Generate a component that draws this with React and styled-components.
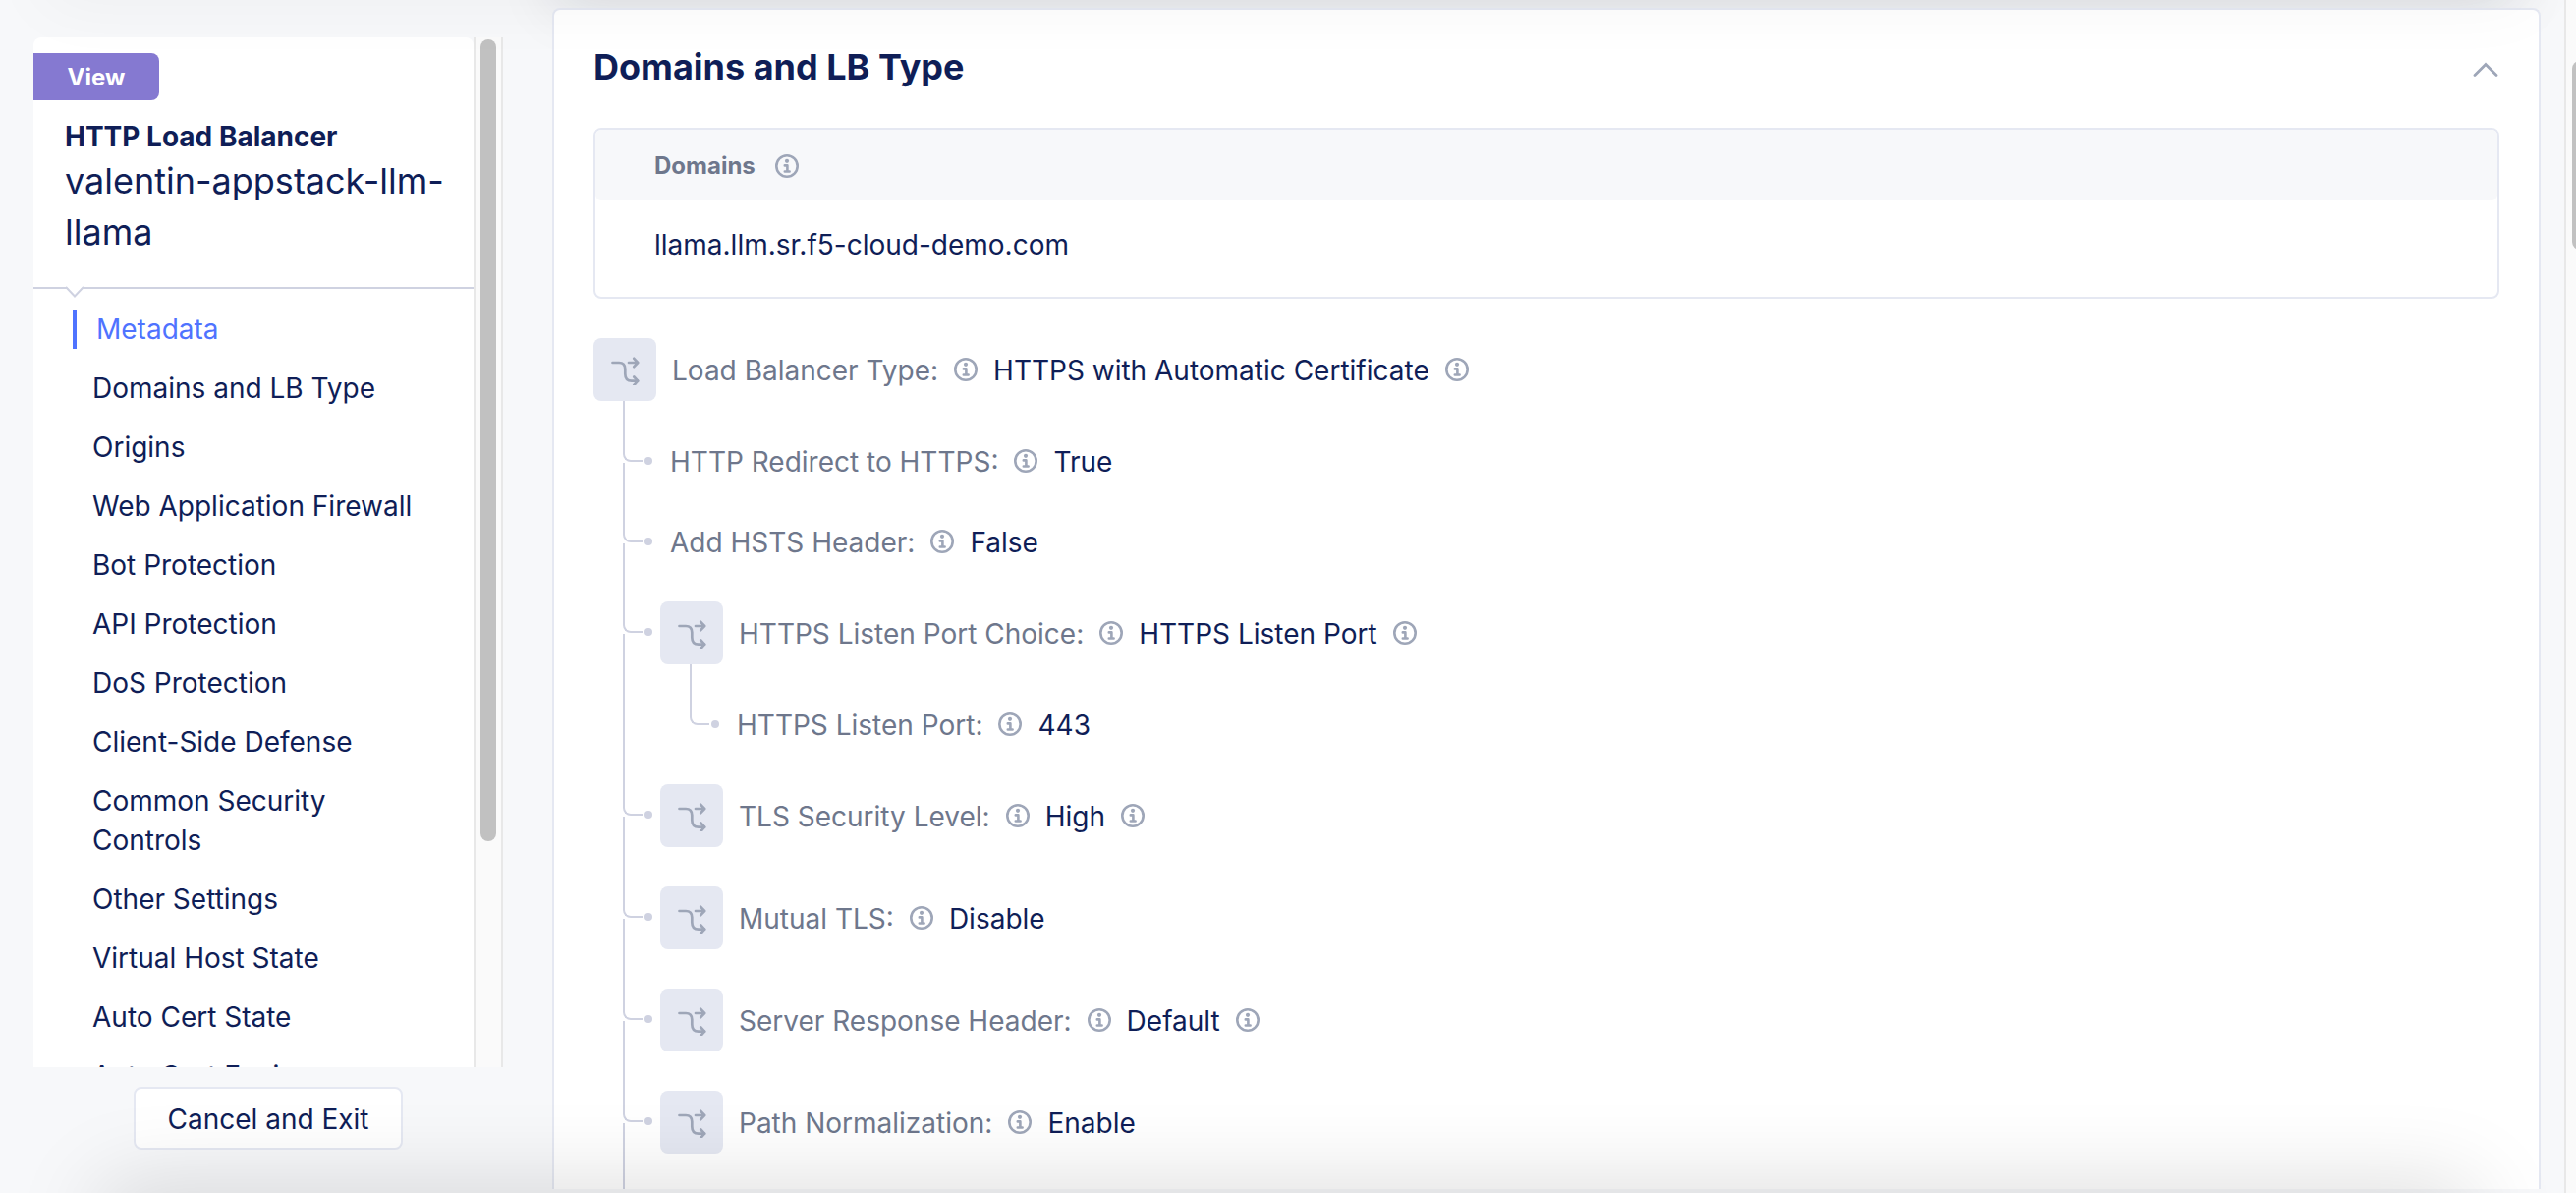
import React from "react";
import styled, { createGlobalStyle } from "styled-components";

const color = {
  page: "#f7f8fa",
  ink: "#0f1e57",
  muted: "#6e778c",
  icon: "#9ea6b8",
  border: "#e5e8f2",
  line: "#cfd2e1",
  accent: "#4f73ff",
  badge: "#8579d1",
};

const GlobalStyle = createGlobalStyle`
  *, *::before, *::after { box-sizing: border-box; }
  body {
    margin: 0;
    background: ${color.page};
    color: ${color.ink};
    font-family: Inter, "Noto Sans", sans-serif;
    font-size: 28px;
    line-height: 40px;
  }
  ul, h1, h2, p { margin: 0; padding: 0; }
  ul { list-style: none; }
`;

const Page = styled.div`
  position: relative;
  display: flex;
  height: 100vh;
  overflow: hidden;
`;

const Sidebar = styled.aside`
  display: flex;
  flex-direction: column;
  gap: 20px;
  flex: 0 0 512px;
  padding: 38px 0 44px 34px;
`;

const SidebarScroller = styled.div`
  display: flex;
  flex: 1;
  min-height: 0;
  overflow: hidden;
`;

const SidebarPanel = styled.div`
  flex: 1;
  min-width: 0;
  overflow: hidden;
  border-radius: 8px 8px 0 0;
  background: #fff;
`;

const ScrollTrack = styled.div`
  display: flex;
  justify-content: center;
  align-items: flex-start;
  flex: 0 0 30px;
  padding-top: ${(p) => p.$offset}px;
  border: solid #e8e8e8;
  border-width: 0 2px;
  background: #fafafa;
`;

const ScrollThumb = styled.div`
  flex: 0 0 16px;
  height: ${(p) => p.$share}%;
  border-radius: 8px;
  background: #c1c1c1;
`;

const SidebarHeader = styled.header`
  position: relative;
  padding: 16px 0 30px;
  border-bottom: 2px solid ${color.line};
`;

const Badge = styled.span`
  display: block;
  width: 128px;
  padding-top: 2px;
  border-radius: 0 8px 8px 0;
  background: ${color.badge};
  color: #fff;
  font-size: 24px;
  font-weight: 700;
  line-height: 46px;
  text-align: center;
`;

const ObjectKind = styled.p`
  padding: 18px 32px 0;
  font-weight: 700;
  line-height: 38px;
`;

const ObjectName = styled.h1`
  padding: 0 16px 0 32px;
  font-size: 36px;
  font-weight: 400;
  line-height: 52px;
`;

const Notch = styled.svg`
  position: absolute;
  left: 32px;
  bottom: -12px;
`;

const NavList = styled.ul`
  padding: 11px 48px 0 40px;
`;

const NavItem = styled.li`
  padding: 10px 0;
`;

const NavLink = styled.a`
  display: block;
  border-left: 4px solid ${(p) => (p.$active ? color.accent : "transparent")};
  padding-left: ${(p) => (p.$active ? 20 : 16)}px;
  color: ${(p) => (p.$active ? color.accent : color.ink)};
  text-decoration: none;
`;

const CancelButton = styled.button`
  align-self: center;
  height: 64px;
  padding: 2px 32px 0;
  border: 2px solid ${color.border};
  border-radius: 8px;
  background: #fff;
  color: ${color.ink};
  font: inherit;
`;

const Main = styled.main`
  display: flex;
  flex: 1;
  min-width: 0;
  overflow: hidden;
  margin-bottom: 4px;
  padding: 8px 24px 0 50px;
`;

const Card = styled.section`
  position: relative;
  flex: 1;
  min-width: 0;
  padding: 32px 40px 0;
  border: 2px solid ${color.border};
  border-bottom: 0;
  border-radius: 8px 8px 0 0;
  background: #fff;
`;

const CardHeader = styled.header`
  display: flex;
  justify-content: space-between;
  align-items: center;
  height: 52px;
`;

const CardTitle = styled.h2`
  font-size: 36px;
  font-weight: 700;
  line-height: 52px;
`;

const CollapseButton = styled.button`
  display: flex;
  padding: 4px 0 0;
  border: 0;
  background: none;
`;

const DomainTable = styled.table`
  width: 100%;
  margin: 36px 0 40px;
  border: 2px solid ${color.border};
  border-radius: 8px;
  border-spacing: 0;
  text-align: left;
`;

const HeadCell = styled.th`
  height: 72px;
  padding: 2px 60px 0;
  border-radius: 6px;
  background: ${color.page};
  color: ${color.muted};
  font-size: 24px;
  font-weight: 700;
`;

const HeadLabel = styled.span`
  display: flex;
  align-items: center;
  gap: 20px;
`;

const BodyCell = styled.td`
  height: 98px;
  padding: 0 60px 8px;
`;

const Field = styled.div`
  display: flex;
  align-items: center;
  gap: 16px;
  height: ${(p) => (p.$choice ? 64 : 42)}px;
  padding-left: ${(p) => (p.$choice ? 0 : 10)}px;
`;

const ChoiceTile = styled.span`
  display: flex;
  justify-content: center;
  align-items: center;
  width: 64px;
  height: 64px;
  border-radius: 8px;
  background: ${color.border};
`;

const FieldText = styled.span`
  padding-top: 2px;
  color: ${(p) => (p.$muted ? color.muted : color.ink)};
`;

const InfoButton = styled.button`
  display: flex;
  padding: 0;
  border: 0;
  background: none;
`;

const Children = styled.ul`
  padding-left: 30px;
`;

const TreeItem = styled.li`
  display: flex;
`;

const Gutter = styled.div`
  display: flex;
  flex-direction: column;
  gap: 1px;
  flex: 0 0 38px;
`;

const Joint = styled.div`
  display: flex;
  align-items: flex-end;
  gap: 2px;
  height: ${(p) => (p.$choice ? 72 : 62)}px;
`;

const Elbow = styled.span`
  width: 20px;
  height: 100%;
  border: solid ${color.line};
  border-width: 0 0 2px 2px;
  border-bottom-left-radius: 8px;
`;

const Dot = styled.span`
  width: 8px;
  height: 8px;
  margin-bottom: -3px;
  border-radius: 50%;
  background: ${color.line};
`;

const Stem = styled.span`
  flex: 1;
  width: 2px;
  background: ${color.line};
`;

const Branch = styled.div`
  flex: 1;
  padding-top: 40px;
`;

const PageTrack = styled.div`
  flex: 0 0 12px;
  overflow: hidden;
  padding: 62px 0 0 6px;
  border-left: 2px solid #e8e8e8;
  background: #fafafa;
`;

const PageThumb = styled.div`
  width: 16px;
  height: 192px;
  border-radius: 8px;
  background: #c1c1c1;
`;

const HeaderShade = styled.div`
  position: absolute;
  top: -60px;
  left: 580px;
  right: 80px;
  height: 50px;
  box-shadow: 0 0 60px 16px rgba(20, 22, 40, 0.12);
  pointer-events: none;
`;

const TopShade = styled.div`
  position: absolute;
  top: -60px;
  left: 60px;
  right: 60px;
  height: 50px;
  box-shadow: 0 0 70px 16px rgba(0, 0, 0, 0.04);
  pointer-events: none;
`;

const BottomShade = styled.div`
  position: absolute;
  bottom: -60px;
  left: 120px;
  right: 120px;
  height: 50px;
  box-shadow: 0 0 90px 16px rgba(0, 0, 0, 0.15);
  pointer-events: none;
`;

function InfoIcon() {
  return (
    <svg width="24" height="24" viewBox="0 0 24 24" fill="none" stroke={color.icon}>
      <circle cx="12" cy="12" r="10.7" strokeWidth="2.6" />
      <circle cx="12" cy="6.8" r="2.1" fill={color.icon} stroke="none" />
      <path d="M9.800 11.400h2.600v6M9.800 17.500h4.800" strokeWidth="2.600" strokeLinecap="round" strokeLinejoin="round" />
    </svg>
  );
}

function Info({ about }) {
  return (
    <InfoButton type="button" aria-label={`About ${about}`}>
      <InfoIcon />
    </InfoButton>
  );
}

function ChoiceIcon() {
  return (
    <svg
      width="32"
      height="32"
      viewBox="0 0 32 32"
      fill="none"
      stroke={color.icon}
      strokeWidth="2.700"
      strokeLinecap="round"
      strokeLinejoin="round"
    >
      <path d="M3.5 9H10c4 0 6.300 2.200 6.300 6.500v5c0 4.800 2.200 7.200 6.700 7.200h6" />
      <path d="M20 9h9M25.300 4.800L29.200 9l-3.900 4.200M25.300 23.500l3.900 4.200-3.900 4.200" />
    </svg>
  );
}

function FieldRow({ node }) {
  return (
    <Field $choice={node.choice}>
      {node.choice && (
        <ChoiceTile>
          <ChoiceIcon />
        </ChoiceTile>
      )}
      <FieldText $muted>{node.label}:</FieldText>
      <Info about={node.label} />
      <FieldText>{node.value}</FieldText>
      {node.valueInfo && <Info about={node.value} />}
    </Field>
  );
}

function Tree({ nodes, open }) {
  return (
    <Children>
      {nodes.map((node, i) => (
        <TreeItem key={node.label}>
          <Gutter>
            <Joint $choice={node.choice}>
              <Elbow />
              <Dot />
            </Joint>
            {(open || i < nodes.length - 1) && <Stem />}
          </Gutter>
          <Branch>
            <FieldRow node={node} />
            {node.children && <Tree nodes={node.children} />}
          </Branch>
        </TreeItem>
      ))}
      {open && (
        <TreeItem>
          <Gutter>
            <Joint $choice>
              <Elbow />
            </Joint>
          </Gutter>
        </TreeItem>
      )}
    </Children>
  );
}

const sections = [
  "Metadata",
  "Domains and LB Type",
  "Origins",
  "Web Application Firewall",
  "Bot Protection",
  "API Protection",
  "DoS Protection",
  "Client-Side Defense",
  "Common Security Controls",
  "Other Settings",
  "Virtual Host State",
  "Auto Cert State",
  "Auto Cert Expiry",
];

const loadBalancer = {
  label: "Load Balancer Type",
  value: "HTTPS with Automatic Certificate",
  choice: true,
  valueInfo: true,
};

const settings = [
  { label: "HTTP Redirect to HTTPS", value: "True" },
  { label: "Add HSTS Header", value: "False" },
  {
    label: "HTTPS Listen Port Choice",
    value: "HTTPS Listen Port",
    choice: true,
    valueInfo: true,
    children: [{ label: "HTTPS Listen Port", value: "443" }],
  },
  { label: "TLS Security Level", value: "High", choice: true, valueInfo: true },
  { label: "Mutual TLS", value: "Disable", choice: true },
  { label: "Server Response Header", value: "Default", choice: true, valueInfo: true },
  { label: "Path Normalization", value: "Enable", choice: true },
];

export default function App() {
  return (
    <>
      <GlobalStyle />
      <Page>
        <HeaderShade />
        <Sidebar>
          <SidebarScroller>
            <SidebarPanel>
              <SidebarHeader>
                <Badge>View</Badge>
                <ObjectKind>HTTP Load Balancer</ObjectKind>
                <ObjectName>valentin-appstack-llm-llama</ObjectName>
                <Notch width="20" height="14" viewBox="0 0 20 14">
                  <path d="M1 1l9 10 9-10V0H1z" fill="#fff" />
                  <path d="M1 2l9 9.500 9-9.500" fill="none" stroke={color.line} strokeWidth="2" />
                </Notch>
              </SidebarHeader>
              <nav>
                <NavList>
                  {sections.map((name, i) => (
                    <NavItem key={name}>
                      <NavLink href="#" $active={i === 0}>
                        {name}
                      </NavLink>
                    </NavItem>
                  ))}
                </NavList>
              </nav>
            </SidebarPanel>
            <ScrollTrack $offset={2}>
              <ScrollThumb $share={78} />
            </ScrollTrack>
          </SidebarScroller>
          <CancelButton type="button">Cancel and Exit</CancelButton>
        </Sidebar>
        <Main>
          <Card>
            <CardHeader>
              <CardTitle>Domains and LB Type</CardTitle>
              <CollapseButton type="button" aria-label="Collapse section">
                <svg width="28" height="18" viewBox="0 0 28 18" fill="none">
                  <path d="M3 15.500L14 4.500l11 11" stroke={color.icon} strokeWidth="2.800" strokeLinecap="round" />
                </svg>
              </CollapseButton>
            </CardHeader>
            <DomainTable>
              <thead>
                <tr>
                  <HeadCell>
                    <HeadLabel>
                      Domains
                      <Info about="Domains" />
                    </HeadLabel>
                  </HeadCell>
                </tr>
              </thead>
              <tbody>
                <tr>
                  <BodyCell>llama.llm.sr.f5-cloud-demo.com</BodyCell>
                </tr>
              </tbody>
            </DomainTable>
            <FieldRow node={loadBalancer} />
            <Tree nodes={settings} open />
          </Card>
        </Main>
        <PageTrack>
          <PageThumb />
        </PageTrack>
        <TopShade />
        <BottomShade />
      </Page>
    </>
  );
}
